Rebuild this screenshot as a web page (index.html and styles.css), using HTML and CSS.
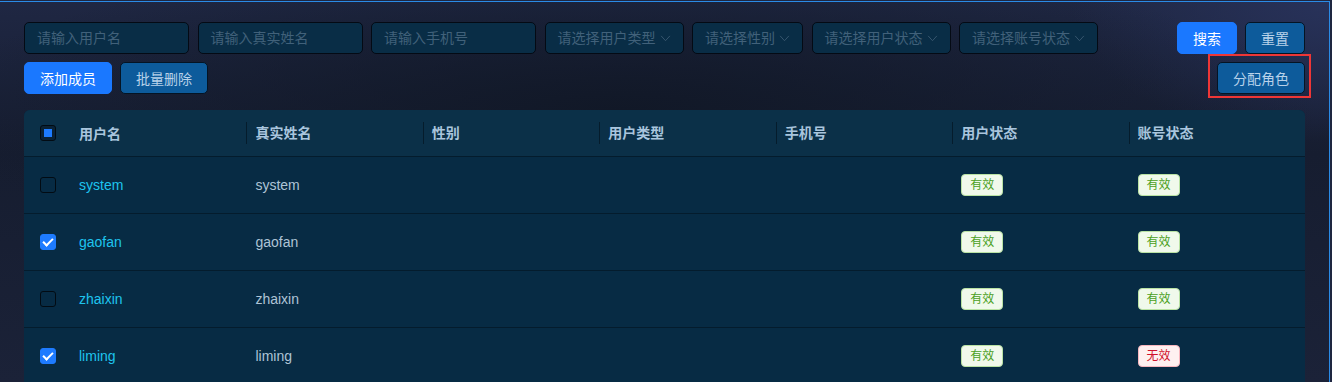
FILE: index.html
```html
<!DOCTYPE html>
<html lang="zh-CN">
<head>
  <meta charset="UTF-8" />
  <meta name="viewport" content="width=device-width, initial-scale=1.0"/>
  <title>用户管理</title>
  <link rel="stylesheet" href="styles.css">
</head>
<body>
<div class="page">

  <div class="toolbar">
    <div class="filters">
      <div class="field w-lg">请输入用户名</div>
      <div class="field w-lg">请输入真实姓名</div>
      <div class="field w-lg">请输入手机号</div>
      <div class="field select w-md">请选择用户类型<svg class="arrow" viewBox="0 0 12 8"><polyline points="1,1 6,6.5 11,1"/></svg></div>
      <div class="field select w-sm">请选择性别<svg class="arrow" viewBox="0 0 12 8"><polyline points="1,1 6,6.5 11,1"/></svg></div>
      <div class="field select w-md">请选择用户状态<svg class="arrow" viewBox="0 0 12 8"><polyline points="1,1 6,6.5 11,1"/></svg></div>
      <div class="field select w-md">请选择账号状态<svg class="arrow" viewBox="0 0 12 8"><polyline points="1,1 6,6.5 11,1"/></svg></div>
    </div>
    <div class="actions">
      <button class="btn primary">搜索</button>
      <button class="btn plain">重置</button>
    </div>
  </div>

  <div class="toolbar second">
    <div class="actions">
      <button class="btn primary wide">添加成员</button>
      <button class="btn plain wide">批量删除</button>
    </div>
    <div class="actions">
      <button class="btn plain wide marked">分配角色</button>
    </div>
  </div>

  <div class="table">
    <div class="row head">
      <div class="cell check"><span class="box partial"></span></div>
      <div class="cell">用户名</div>
      <div class="cell sep">真实姓名</div>
      <div class="cell sep">性别</div>
      <div class="cell sep">用户类型</div>
      <div class="cell sep">手机号</div>
      <div class="cell sep">用户状态</div>
      <div class="cell sep">账号状态</div>
    </div>

    <div class="row">
      <div class="cell check"><span class="box"></span></div>
      <div class="cell name">system</div>
      <div class="cell">system</div>
      <div class="cell"></div>
      <div class="cell"></div>
      <div class="cell"></div>
      <div class="cell"><span class="tag ok">有效</span></div>
      <div class="cell"><span class="tag ok">有效</span></div>
    </div>

    <div class="row">
      <div class="cell check"><span class="box checked"></span></div>
      <div class="cell name">gaofan</div>
      <div class="cell">gaofan</div>
      <div class="cell"></div>
      <div class="cell"></div>
      <div class="cell"></div>
      <div class="cell"><span class="tag ok">有效</span></div>
      <div class="cell"><span class="tag ok">有效</span></div>
    </div>

    <div class="row">
      <div class="cell check"><span class="box"></span></div>
      <div class="cell name">zhaixin</div>
      <div class="cell">zhaixin</div>
      <div class="cell"></div>
      <div class="cell"></div>
      <div class="cell"></div>
      <div class="cell"><span class="tag ok">有效</span></div>
      <div class="cell"><span class="tag ok">有效</span></div>
    </div>

    <div class="row">
      <div class="cell check"><span class="box checked"></span></div>
      <div class="cell name">liming</div>
      <div class="cell">liming</div>
      <div class="cell"></div>
      <div class="cell"></div>
      <div class="cell"></div>
      <div class="cell"><span class="tag ok">有效</span></div>
      <div class="cell"><span class="tag bad">无效</span></div>
    </div>
  </div>

</div>
</body>
</html>
```

FILE: styles.css
```css
body {
  margin: 0;
  padding-top: 1px;
  background: #1e2640;
  font-family: "Liberation Sans", "Noto Sans CJK SC", sans-serif;
  font-size: 14px;
  overflow: hidden;
}

.page {
  box-sizing: border-box;
  width: 1330px;
  height: 381px;
  padding: 20px 24px 0 24px;
  border-top: 1px solid #2a8be6;
  border-right: 1px solid #2a8be6;
  background:
    radial-gradient(ellipse 700px 160px at 620px 110px, #111827 0%, rgba(17, 24, 39, 0) 100%),
    radial-gradient(ellipse 260px 140px at 1330px 0, #28325a 0%, rgba(40, 50, 90, 0) 100%),
    linear-gradient(to bottom, #1f2743 0%, #161d30 40%, #1b2238 100%);
}

.toolbar {
  display: flex;
  justify-content: space-between;
  align-items: center;
}

.toolbar.second {
  margin-top: 8px;
  margin-bottom: 16px;
}

.filters {
  display: flex;
  gap: 8.5px;
}

.field {
  box-sizing: border-box;
  height: 32px;
  line-height: 30px;
  padding: 0 12px;
  border: 1px solid #040a14;
  border-radius: 5px;
  background: #092d46;
  color: #41617a;
  position: relative;
}

.w-lg { width: 165px; }
.w-md { width: 139px; }
.w-sm { width: 111px; }

.arrow {
  position: absolute;
  right: 12px;
  top: 12px;
  width: 11px;
  height: 7px;
  fill: none;
  stroke: #3d5b73;
  stroke-width: 1;
}

.actions {
  display: flex;
  gap: 8px;
}

.btn {
  box-sizing: border-box;
  height: 32px;
  padding: 0 15px;
  border-radius: 5px;
  font-family: inherit;
  font-size: 14px;
}

.btn.wide {
  padding: 0 15px;
}

.btn.primary {
  background: #1a78ff;
  border: 1px solid #1a78ff;
  color: #ffffff;
}

.btn.plain {
  background: #0d5b9b;
  border: 1px solid #041424;
  color: #b8d2ea;
}

.marked {
  position: relative;
}

.marked::after {
  content: "";
  position: absolute;
  left: -10px;
  right: -7px;
  top: -9px;
  bottom: -5px;
  border: 2px solid #ee3636;
}

.table {
  border-radius: 6px 6px 0 0;
  overflow: hidden;
  background: #072b44;
}

.row {
  display: grid;
  grid-template-columns: 46px repeat(7, 1fr);
  height: 57px;
  align-items: center;
  border-bottom: 1px solid #041c2d;
  box-sizing: border-box;
  color: #aec4d6;
}

.row.head {
  height: 47px;
  background: #0b3048;
  color: #a9c5dd;
  font-weight: bold;
}

.cell {
  padding-left: 9px;
  white-space: nowrap;
}

.head .cell.sep {
  border-left: 1px solid #051c2c;
  line-height: 22px;
  padding-left: 8px;
}

.cell.check {
  padding-left: 16px;
  display: flex;
}

.cell.name {
  color: #1ec4ee;
}

.box {
  box-sizing: border-box;
  width: 16px;
  height: 16px;
  border: 1px solid #020b13;
  border-radius: 3px;
  position: relative;
}

.box.partial {
  background: #0a2236;
}

.box.partial::after {
  content: "";
  position: absolute;
  left: 3px;
  top: 3px;
  width: 8px;
  height: 8px;
  background: #1e7bff;
}

.box.checked {
  background: #1e7bff;
  border-color: #1e7bff;
}

.box.checked::after {
  content: "";
  position: absolute;
  left: 4px;
  top: 1px;
  width: 4px;
  height: 8px;
  border-right: 2px solid #ffffff;
  border-bottom: 2px solid #ffffff;
  transform: rotate(45deg);
}

.tag {
  display: inline-block;
  box-sizing: border-box;
  height: 22px;
  line-height: 20px;
  padding: 0 8px;
  font-size: 12px;
  border-radius: 4px;
  border: 1px solid;
}

.tag.ok {
  background: #f0f9eb;
  border-color: #b9e2a3;
  color: #4aa01c;
}

.tag.bad {
  background: #fef0f0;
  border-color: #f7b6be;
  color: #d0112b;
}
```
